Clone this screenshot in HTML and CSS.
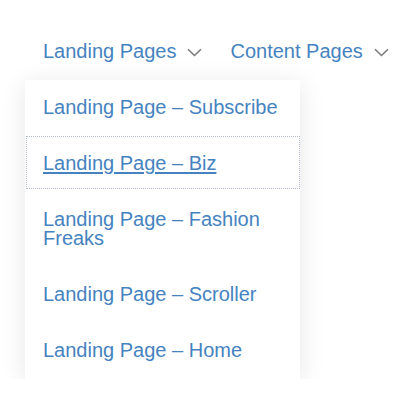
FILE: index.html
```html
<!DOCTYPE html>
<html lang="en">
<head>
<meta charset="utf-8">
<title>Menu</title>
<link rel="stylesheet" href="styles.css">
</head>
<body>
<nav class="nav">
  <ul class="nav-list">
    <li class="nav-item">
      <a class="nav-link" href="#">Landing Pages</a>
      <svg class="chev" width="15" height="9" viewBox="0 0 15 9"><path d="M1 1.2 L7.5 7.5 L14 1.2" fill="none" stroke="#7a7a7a" stroke-width="1.6"/></svg>
    </li>
    <li class="nav-item">
      <a class="nav-link" href="#">Content Pages</a>
      <svg class="chev" width="15" height="9" viewBox="0 0 15 9"><path d="M1 1.2 L7.5 7.5 L14 1.2" fill="none" stroke="#7a7a7a" stroke-width="1.6"/></svg>
    </li>
  </ul>
  <ul class="submenu">
    <li class="sub-item"><a class="sub-link" href="#">Landing Page – Subscribe</a></li>
    <li class="sub-item"><a class="sub-link current" href="#">Landing Page – Biz</a></li>
    <li class="sub-item"><a class="sub-link" href="#">Landing Page – Fashion Freaks</a></li>
    <li class="sub-item"><a class="sub-link" href="#">Landing Page – Scroller</a></li>
    <li class="sub-item"><a class="sub-link" href="#">Landing Page – Home</a></li>
  </ul>
</nav>
</body>
</html>
```
FILE: styles.css
```css
html, body {
  margin: 0;
  padding: 0;
  background: #ffffff;
}
body {
  font-family: "Liberation Sans", Arial, sans-serif;
  font-size: 20px;
  color: #4583c0;
}
a {
  color: #4583c0;
  text-decoration: none;
}
.nav {
  padding: 41px 0 0 43px;
}
.nav-list {
  list-style: none;
  margin: 0;
  padding: 0;
  display: flex;
  gap: 28px;
}
.nav-item {
  display: flex;
  align-items: center;
  gap: 11px;
  line-height: 20px;
}
.chev {
  display: block;
  margin-top: 2px;
}
.submenu {
  width: 275px;
  list-style: none;
  margin: 19px 0 0 -18px;
  padding: 0;
  background: #ffffff;
  box-shadow: 0 4px 24px rgba(0, 0, 0, 0.1);
}
.sub-item {
  padding: 1px 1px 4px 2px;
}
.sub-link {
  display: block;
  padding: 17px 14px 15px 16px;
  line-height: 19px;
}
.sub-link.current {
  text-decoration: underline;
  text-underline-offset: 2px;
  outline: 1px dotted #b3bcc6;
}
```
